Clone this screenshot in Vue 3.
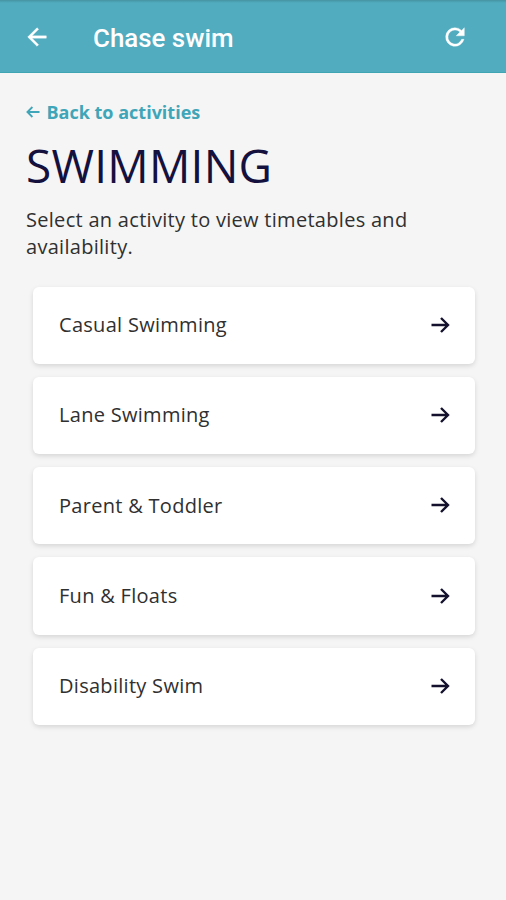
<script setup>
const activities = [
  'Casual Swimming',
  'Lane Swimming',
  'Parent & Toddler',
  'Fun & Floats',
  'Disability Swim',
]
</script>

<template>
  <div class="page">
    <header class="topbar">
      <svg class="icon" viewBox="0 0 24 24">
        <path d="M20 11H7.83l5.59-5.59L12 4l-8 8 8 8 1.41-1.41L7.83 13H20v-2z" />
      </svg>
      <span class="title">Chase swim</span>
      <svg class="icon" viewBox="0 0 24 24">
        <path d="M17.65 6.35A7.96 7.96 0 0 0 12 4a8 8 0 1 0 7.73 10h-2.08A6 6 0 1 1 12 6c1.66 0 3.14.69 4.22 1.78L13 11h7V4l-2.35 2.35z" />
      </svg>
    </header>

    <main>
      <a class="back">
        <svg viewBox="0 0 14 12">
          <path d="M13.5 6H1.5M6.4 1L1.4 6L6.4 11" />
        </svg>
        <span>Back to activities</span>
      </a>
      <h1>SWIMMING</h1>
      <p>Select an activity to view timetables and availability.</p>

      <ul class="list">
        <li v-for="activity in activities" :key="activity" class="card">
          <span>{{ activity }}</span>
          <svg viewBox="0 0 20 18">
            <path d="M1.5 9H18M11 2L18 9L11 16" />
          </svg>
        </li>
      </ul>
    </main>
  </div>
</template>

<style>
body {
  margin: 0;
  background: #f5f5f5;
}
</style>

<style scoped>
.page {
  min-height: 900px;
  background: #f5f5f5;
  font-family: 'Open Sans', sans-serif;
  color: #303030;
}

.topbar {
  display: flex;
  align-items: center;
  height: 72.5px;
  padding: 2px 37px 0 22.5px;
  box-sizing: border-box;
  border-bottom: 1px solid #3fa5b3;
  background: linear-gradient(#4593a3, #51acbf 3px);
  color: #fff;
}

.icon {
  width: 28px;
  height: 28px;
  fill: currentColor;
  stroke: currentColor;
  stroke-width: 0.3;
}

.title {
  flex: 1;
  margin: 2px 0 0 42.5px;
  font: 500 25.9px/32px Roboto, sans-serif;
}

main {
  padding: 27px 26px 0;
}

.back {
  display: flex;
  align-items: center;
  height: 24px;
  color: #3fa5b8;
  font-size: 18px;
  font-weight: 700;
}

.back svg {
  width: 14px;
  height: 12px;
  margin-right: 6.5px;
  fill: none;
  stroke: currentColor;
  stroke-width: 1.8;
}

h1 {
  margin: 10px 0;
  font-size: 46px;
  line-height: 62px;
  font-weight: 400;
  letter-spacing: 0.25px;
  color: #14113f;
}

p {
  margin: 0;
  font-size: 20px;
  line-height: 27px;
  letter-spacing: 0.29px;
}

.list {
  display: flex;
  flex-direction: column;
  gap: 13px;
  margin: 27px 5px 0 7px;
  padding: 0;
  list-style: none;
}

.card {
  display: flex;
  align-items: center;
  justify-content: space-between;
  height: 77.3px;
  padding: 0 25px 1px 26px;
  box-sizing: border-box;
  border-radius: 6px;
  background: #fff;
  box-shadow: 0 2px 5px rgba(0, 0, 0, 0.13);
  font-size: 20px;
  letter-spacing: 0.29px;
}

.card svg {
  width: 20px;
  height: 18px;
  fill: none;
  stroke: #14112f;
  stroke-width: 2.4;
}
</style>
